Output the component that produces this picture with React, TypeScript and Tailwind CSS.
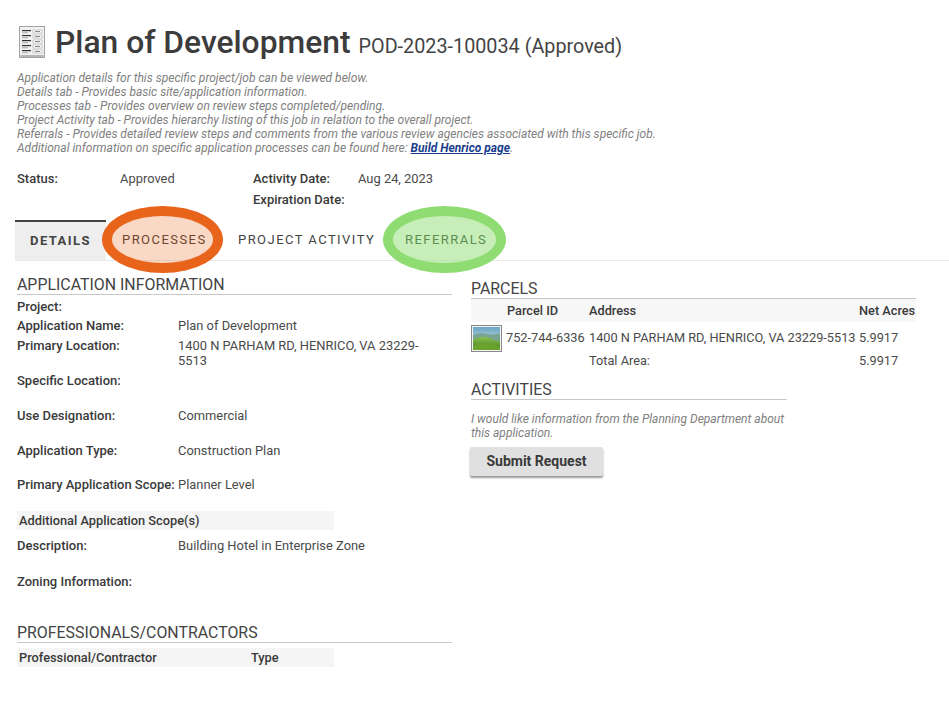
import React from 'react';

const intro = [
  'Application details for this specific project/job can be viewed below.',
  'Details tab - Provides basic site/application information.',
  'Processes tab - Provides overview on review steps completed/pending.',
  'Project Activity tab - Provides hierarchy listing of this job in relation to the overall project.',
  'Referrals - Provides detailed review steps and comments from the various review agencies associated with this specific job.',
];

function FormIcon() {
  return (
    <svg width="26" height="32" viewBox="0 0 26 32" className="shrink-0">
      <rect x="0.5" y="0.5" width="25" height="31" fill="#f1f1f1" stroke="#a3a3a3" />
      <rect x="1.5" y="29" width="23" height="2" fill="#b5b5b5" />
      {[4, 9, 14, 19, 24].map((y) => (
        <g key={y}>
          <rect x="3" y={y} width="9" height="1.2" fill="#333" />
          <rect x="3" y={y + 2.4} width="6" height="0.8" fill="#999" />
          <rect x="14" y={y} width="9" height="3" fill="#fff" stroke="#aaa" strokeWidth="0.6" />
          <rect x="16" y={y + 1} width="5" height="1" fill="#888" />
        </g>
      ))}
    </svg>
  );
}

function Landscape() {
  return (
    <svg width="31" height="27" viewBox="0 0 31 27" className="shrink-0">
      <defs>
        <linearGradient id="sky" x1="0" y1="0" x2="0" y2="1">
          <stop offset="0" stopColor="#6aa6c6" />
          <stop offset="1" stopColor="#e4ece6" />
        </linearGradient>
        <linearGradient id="hill" x1="0" y1="0" x2="0" y2="1">
          <stop offset="0" stopColor="#8cc04a" />
          <stop offset="1" stopColor="#3f7f22" />
        </linearGradient>
      </defs>
      <rect x="0.5" y="0.5" width="30" height="26" fill="#f4f4f4" stroke="#8a8a8a" />
      <rect x="2" y="2" width="27" height="23" fill="url(#sky)" />
      <path d="M2 10 Q9 7 16 9 T29 8 V16 H2 Z" fill="#7ba391" />
      <path d="M2 15 Q12 9 21 14 T29 13 V25 H2 Z" fill="url(#hill)" />
      <path d="M2 21 Q14 15 29 22 V25 H2 Z" fill="#6aa32c" />
    </svg>
  );
}

function Heading({ children }: { children: React.ReactNode }) {
  return (
    <h2 className="text-[15.9px] leading-[18px] text-[#444] border-b border-[#c8c8c8]">{children}</h2>
  );
}

function Row({ label, value, className }: { label: string; value?: React.ReactNode; className: string }) {
  return (
    <div className={`flex text-[12.9px] leading-[15px] ${className}`}>
      <div className="w-[161px] shrink-0 text-[13px] font-medium text-[#3a3a3a] whitespace-nowrap">{label}</div>
      <div className="w-[250px] text-[#4a4a4a]">{value}</div>
    </div>
  );
}

export default function App() {
  return (
    <div className="w-[949px] h-[710px] overflow-hidden bg-white text-[#444] font-['Roboto',sans-serif]">
      {/* Title */}
      <div className="flex items-center pl-[19px] pt-[24px] h-[60px]">
        <FormIcon />
        <h1 className="ml-[10px] text-[31.8px] leading-[34px] font-medium text-[#3c3c3c] whitespace-nowrap">Plan of Development</h1>
        <span className="ml-[8px] mt-[9px] text-[19.8px] leading-[24px] text-[#444] whitespace-nowrap">POD-2023-100034 (Approved)</span>
      </div>

      {/* Intro notes */}
      <div className="pl-[17px] pt-[11px] text-[12.02px] leading-[14px] italic text-[#808080]">
        {intro.map((line) => (
          <p key={line}>{line}</p>
        ))}
        <p>
          Additional information on specific application processes can be found here:{' '}
          <a className="font-bold text-[#1a3e8c] underline">Build Henrico page</a>.
        </p>
      </div>

      {/* Status */}
      <div className="flex pl-[17px] pt-[13px] text-[12.9px] leading-[21px]">
        <div className="w-[103px] text-[13px] font-medium text-[#3a3a3a]">Status:</div>
        <div className="w-[133px] text-[#4a4a4a]">Approved</div>
        <div className="w-[105px] text-[13px] font-medium text-[#3a3a3a]">
          <div>Activity Date:</div>
          <div>Expiration Date:</div>
        </div>
        <div className="text-[#4a4a4a]">Aug 24, 2023</div>
      </div>

      {/* Tabs */}
      <div className="relative mt-[10px] ml-[15px] h-[41px] flex border-b border-[#eaeaea] text-[13px] tracking-[1.45px] text-[#444]">
        <div className="w-[91px] h-[40px] flex items-center justify-center bg-[#eeeeee] border-t-2 border-[#444] font-bold">DETAILS</div>
        <div className="w-[132px] flex items-center pl-[16px] text-[#4a3a33]">PROCESSES</div>
        <div className="w-[155px] flex items-center">PROJECT ACTIVITY</div>
        <div className="flex items-center text-[#26402a] pl-[12px]">REFERRALS</div>
        <div className="absolute left-[87px] top-[-14px] w-[121px] h-[67px] rounded-[50%] border-[10px] border-[#e8641b] bg-[#e8641b]/25" />
        <div className="absolute left-[368px] top-[-14px] w-[123px] h-[67px] rounded-[50%] border-[10px] border-[#8fdc73] bg-[#8fdc73]/50" />
      </div>

      <div className="flex pl-[17px] pt-[15px]">
        {/* Left column */}
        <div className="w-[435px] shrink-0">
          <Heading>APPLICATION INFORMATION</Heading>
          <Row label="Project:" className="mt-[4px]" />
          <Row label="Application Name:" value="Plan of Development" className="mt-[4px]" />
          <Row label="Primary Location:" value="1400 N PARHAM RD, HENRICO, VA 23229-5513" className="mt-[5px]" />
          <Row label="Specific Location:" className="mt-[5px]" />
          <Row label="Use Designation:" value="Commercial" className="mt-[20px]" />
          <Row label="Application Type:" value="Construction Plan" className="mt-[20px]" />
          <Row label="Primary Application Scope:" value="Planner Level" className="mt-[19px]" />
          <div className="mt-[19px] w-[317px] h-[19px] pl-[2px] bg-[#f5f5f5] text-[12.8px] leading-[19px] font-medium text-[#3a3a3a]">
            Additional Application Scope(s)
          </div>
          <Row label="Description:" value="Building Hotel in Enterprise Zone" className="mt-[8px]" />
          <Row label="Zoning Information:" className="mt-[21px]" />
          <div className="mt-[35px]">
            <Heading>PROFESSIONALS/CONTRACTORS</Heading>
          </div>
          <div className="mt-[5px] w-[317px] h-[19px] pl-[2px] flex bg-[#f5f5f5] text-[12.8px] leading-[19px] font-medium text-[#3a3a3a]">
            <div className="w-[232px]">Professional/Contractor</div>
            <div>Type</div>
          </div>
        </div>

        {/* Right column */}
        <div className="ml-[19px] w-[478px] shrink-0 pt-[4px]">
          <div className="w-[445px]">
            <Heading>PARCELS</Heading>
          </div>
          <div className="w-[445px] h-[23px] pt-px flex items-center bg-[#f7f7f7] text-[12.75px] font-medium text-[#3a3a3a] whitespace-nowrap">
            <div className="w-[36px]" />
            <div className="w-[82px]">Parcel ID</div>
            <div className="w-[270px]">Address</div>
            <div>Net Acres</div>
          </div>
          <div className="flex items-center h-[30px] mt-[1px] text-[12.75px] text-[#4a4a4a] whitespace-nowrap">
            <Landscape />
            <div className="w-[83px] ml-[4px]">752-744-6336</div>
            <div className="w-[270px]">1400 N PARHAM RD, HENRICO, VA 23229-5513</div>
            <div>5.9917</div>
          </div>
          <div className="flex h-[16px] items-center text-[12.75px] text-[#4a4a4a]">
            <div className="w-[118px]" />
            <div className="w-[270px]">Total Area:</div>
            <div>5.9917</div>
          </div>
          <div className="mt-[12px] w-[316px]">
            <Heading>ACTIVITIES</Heading>
          </div>
          <p className="mt-[12px] w-[320px] text-[12px] leading-[14px] italic text-[#808080]">
            I would like information from the Planning Department about this application.
          </p>
          <button className="block mt-[7px] -ml-px w-[133px] h-[29px] rounded-[2px] bg-[#e0e0e0] text-[14px] font-bold text-[#3a3a3a] shadow-[0_2px_2px_rgba(0,0,0,0.4)]">
            Submit Request
          </button>
        </div>
      </div>
    </div>
  );
}
